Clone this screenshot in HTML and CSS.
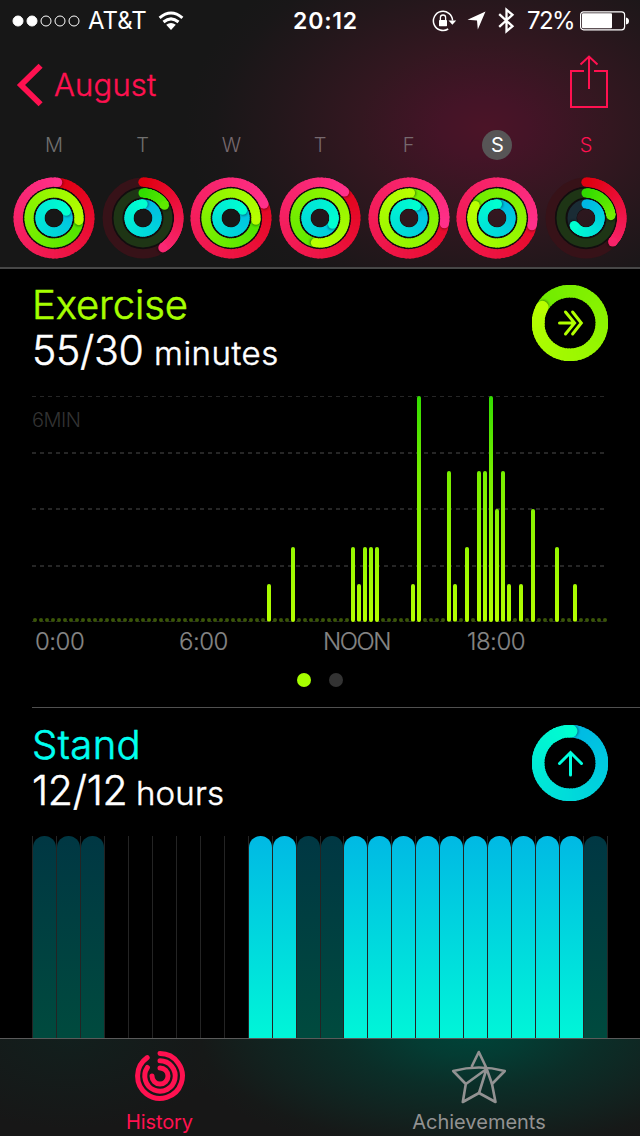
FILE: index.html
```html
<!DOCTYPE html>
<html lang="en">
<head>
<meta charset="utf-8">
<title>Activity</title>
<link rel="stylesheet" href="styles.css">
</head>
<body>
<div class="screen">
  <header class="header">
    <div class="status">
      <div class="status-left">
        <svg class="signal" width="68" height="14" viewBox="0 0 68 14">
          <g fill="#fff" stroke="#fff"><circle cx="6" cy="7" r="5"/><circle cx="20" cy="7" r="5"/></g>
          <g fill="none" stroke="#fff"><circle cx="34" cy="7" r="5"/><circle cx="48" cy="7" r="5"/><circle cx="62" cy="7" r="5"/></g>
        </svg>
        <span class="carrier">AT&amp;T</span>
        <svg class="wifi" width="26" height="20" viewBox="0 0 26 20" fill="none" stroke="#fff" stroke-width="3">
          <path d="M1.6 6.8Q13-2.8 24.4 6.8"/><path d="M5.5 11Q13 4.7 20.5 11"/><path d="M8.2 13.8Q13 10 17.8 13.8L13 19Z" fill="#fff" stroke="none"/>
        </svg>
      </div>
      <span class="clock">20:12</span>
      <div class="status-right">
        <svg class="lock" width="25" height="22" viewBox="0 0 25 22">
          <path d="M16.2 19A9.6 9.6 0 1 1 20.6 10.5" fill="none" stroke="#fff" stroke-width="1.5"/>
          <path d="M16.5 10.5H24.2L20.4 14.7Z" fill="#fff"/><rect x="7" y="10" width="8" height="6.2" rx=".6" fill="#fff"/>
          <path d="M8.4 10V7.6a2.6 2.6 0 0 1 5.2 0V10" fill="none" stroke="#fff" stroke-width="1.3"/>
        </svg>
        <svg class="locate" width="19" height="19" viewBox="0 0 19 19"><path d="M18.5.5L10.8 18.5L10 9.5L.5 8.7Z" fill="#fff"/></svg>
        <svg class="bt" width="17" height="27" viewBox="0 0 17 27" fill="none" stroke="#fff" stroke-width="2.3"><path d="M1.2 7.2L14.5 19.2L8.5 24.3V2.7L14.5 7.8L1.2 19.8"/></svg>
        <span class="percent">72%</span>
        <svg class="battery" width="50" height="20" viewBox="0 0 50 20"><rect x=".6" y=".8" width="44" height="18" rx="3" fill="none" stroke="#fff" stroke-width="1.2"/><rect x="2" y="2.3" width="30" height="15" rx="1" fill="#fff"/><path d="M46 6.5q3 .5 3 3.5t-3 3.5z" fill="#fff"/></svg>
      </div>
    </div>
    <div class="nav">
      <svg class="chevron" width="27" height="44" viewBox="0 0 27 44"><path d="M24.6 2.8L5 22L24.6 41.2" fill="none" stroke="#ff1150" stroke-width="5.8"/></svg>
      <span class="nav-title">August</span>
      <svg class="share" width="38" height="54" viewBox="0 0 38 54" fill="none" stroke="#ff1150" stroke-width="2"><path d="M14 16H1V52H37V16H24M19 34V2M10.5 9.5L19 1.5L27.5 9.5"/></svg>
    </div>
    <div class="week" id="week"></div>
  </header>
  <main class="main">
    <section class="exercise">
      <div class="summary">
        <div>
          <h2 class="title title-exercise">Exercise</h2>
          <p class="value"><span class="num num-ex">55/30</span><span class="unit unit-min">minutes</span></p>
        </div>
        <svg class="badge" id="badge-exercise" width="76" height="76" viewBox="-38 -38 76 76">
          <g class="glyph" fill="none" stroke="#b2ff00" stroke-width="3" stroke-linecap="round" stroke-linejoin="miter"><path d="M-10.5 0H4M-4.5-11L4.6 0L-4.5 11M2.6-11L11.3 0L2.6 11"/></g>
        </svg>
      </div>
      <div class="chart">
        <i class="rule rule-top"></i><i class="rule rule-2"></i><i class="rule rule-3"></i><i class="rule rule-4"></i><i class="rule rule-base"></i>
        <span class="scale">6MIN</span>
        <div class="bars" id="minutes"></div>
      </div>
      <div class="axis"><span>0:00</span><span>6:00</span><span class="noon">NOON</span><span>18:00</span></div>
      <div class="pager"><i class="dot on"></i><i class="dot"></i></div>
    </section>
    <section class="stand">
      <div class="summary">
        <div>
          <h2 class="title title-stand">Stand</h2>
          <p class="value"><span class="num num-st">12/12</span><span class="unit unit-hr">hours</span></p>
        </div>
        <svg class="badge" id="badge-stand" width="76" height="76" viewBox="-38 -38 76 76">
          <g class="glyph" fill="none" stroke="#00ffe0" stroke-width="3" stroke-linecap="round"><path d="M.5 12V-10M-10.5 0.5L.5-10.5L11.5.5"/></g>
        </svg>
      </div>
      <div class="hours" id="hours"></div>
    </section>
  </main>
  <nav class="tabs">
    <div class="tab tab-on">
      <svg width="52" height="54" viewBox="-26 -26 52 54" fill="none" stroke="#ff1150" stroke-width="5" stroke-linecap="round">
        <path d="M0-22.4A22.4 22.4 0 1 1-12.8-18.4"/><path d="M0-15.2A15.2 15.2 0 1 1-12.6-8.5"/><path d="M0-8A8 8 0 1 1-8 0"/>
      </svg>
      <span class="tab-label label-history">History</span>
    </div>
    <div class="tab">
      <svg width="56" height="54" viewBox="0 0 56 54" fill="none" stroke="#929292" stroke-width="2.6" stroke-linejoin="round">
        <path d="M20.5 17L27.8 2L35.2 17.5M2.2 21Q28 14 53.8 21L41 34L44.5 52L28 43L11.8 52L14.8 34Z"/><path d="M14.8 34L35.5 19L28 43M35.2 17.5L41 34"/>
      </svg>
      <span class="tab-label label-achieve">Achievements</span>
    </div>
  </nav>
</div>
<script src="app.js"></script>
</body>
</html>
```

FILE: styles.css
```css
* { box-sizing: border-box; }
body { margin: 0; background: #000; font-family: Inter, "Liberation Sans", sans-serif; font-weight: 300; }
h2, p { margin: 0; font-weight: 300; }
svg { display: block; flex: none; }
.screen { width: 640px; height: 1136px; overflow: hidden; display: flex; flex-direction: column; }
.header { height: 269px; flex: none; border-bottom: 2px solid #474747; background: radial-gradient(ellipse 300px 200px at 485px 128px, #4b1427 0%, #441427 15%, #331720 42%, #23171b 70%, #191718 90%, #171717 100%) #171717; }

.status { height: 41px; display: grid; grid-template-columns: 1fr auto 1fr; align-items: center; color: #fff; padding-left: 12px; padding-right: 10px; }
.status-left, .status-right { display: flex; align-items: center; }
.status-right { justify-content: flex-end; }
.carrier { font-size: 24px; font-weight: 400; margin-left: 8px; width: 59px; letter-spacing: 0; }
.wifi { margin-left: 11px; }
.clock { font-size: 23px; font-weight: 600; letter-spacing: .8px; margin-left: 9px; }
.locate { margin-left: 10px; }
.bt { margin-left: 12px; }
.percent { font-size: 24px; font-weight: 400; width: 53px; margin-left: 12px; letter-spacing: -1.6px; white-space: nowrap; }

.nav { height: 88px; display: flex; align-items: center; padding: 0 32px 0 16px; color: #ff1150; }
.chevron { margin-top: -1px; }
.nav-title { font-size: 31px; margin: -2px 0 0 11px; letter-spacing: .2px; flex: 1; -webkit-text-stroke: .4px; }
.share { margin-top: -6px; }

.week { display: grid; grid-template-columns: repeat(7, 1fr); padding: 1px 9.7px 0; }
.day { display: flex; flex-direction: column; align-items: center; }
.day-name { width: 30px; height: 30px; border-radius: 15px; font-size: 20px; line-height: 30px; text-align: center; color: #77696e; }
.day-name.weekday-dark { color: #707070; }
.day-name.selected { background: #575556; color: #fff; font-weight: 400; }
.day-name.today { color: #ff1150; }
.day svg { margin-top: 17px; }

.main { flex: 1; min-height: 0; overflow: hidden; }
.exercise { height: 438px; padding: 16px 32px 0; }
.stand { margin-left: 32px; padding: 17px 32px 0 0; border-top: 1px solid #505050; }
.summary { display: flex; justify-content: space-between; height: 111px; }
.title { font-size: 40px; line-height: 39px; -webkit-text-stroke: .6px; }
.title-exercise { color: #a6ff00; letter-spacing: -.1px; }
.title-stand { color: #00fff0; letter-spacing: .4px; }
.value { color: #fff; line-height: 52px; white-space: nowrap; -webkit-text-stroke: .5px; }
.num { font-size: 41px; letter-spacing: -.3px; }
.unit { font-size: 33px; margin-left: 10.5px; letter-spacing: .5px; }
.unit-hr { margin-left: 8.5px; letter-spacing: .2px; }

.chart { position: relative; height: 226px; }
.rule { position: absolute; left: 0; width: 575px; height: 2px; background: repeating-linear-gradient(90deg, #262626 0 4px, transparent 4px 8px); }
.rule-top { top: 0; height: 1px; }
.rule-2 { top: 56px; }
.rule-3 { top: 112px; }
.rule-4 { top: 169px; }
.rule-base { bottom: 0; height: 1px; }
.scale { position: absolute; left: 0; top: 12px; font-size: 20px; line-height: 24px; letter-spacing: -.5px; color: #333; }
.bars { position: absolute; left: 1px; top: 0; height: 226px; display: flex; align-items: flex-end; gap: 2px; }
.bar { width: 4px; border-radius: 2px; background: linear-gradient(#32dc00, #78ee00 35%, #b4ff00) bottom / 4px 226px no-repeat; }
.bar.empty { height: 4px; background: #3a5608; }
.axis { display: grid; grid-template-columns: repeat(4, 144px); font-size: 24px; line-height: 40px; letter-spacing: -.5px; color: #858585; padding-left: 3px; -webkit-text-stroke: .2px; }
.noon { letter-spacing: -1.5px; }
.pager { display: flex; justify-content: center; gap: 18px; margin-top: 11px; }
.dot { width: 14px; height: 14px; border-radius: 7px; background: #333; }
.dot.on { background: #a6ff00; }

.hours { width: 576px; height: 208px; display: grid; grid-template-columns: repeat(24, 1fr); border-right: 1px solid #262626; }
.hour { border-left: 1px solid #242424; }
.hour i { display: block; height: 100%; border-radius: 12px 12px 0 0; }
.hour.stood i { background: linear-gradient(#00b9e4, #00f5d8 200px); }
.hour.idle i { background: linear-gradient(#003743, #004a3e 200px); }

.tabs { height: 98px; flex: none; border-top: 1px solid #5a5a5a; display: grid; grid-template-columns: 1fr 1fr; background: radial-gradient(ellipse 300px 125px at 470px -5px, #004338 0%, #043c33 18%, #0b2e28 42%, #12221f 70%, #161918 90%, transparent 100%), radial-gradient(ellipse 160px 90px at 70px 0, #121f1d, transparent), #171717; }
.tab { display: flex; flex-direction: column; align-items: center; padding-top: 11px; color: #929292; }
.tab:last-child { padding-right: 2px; }
.tab-label { font-size: 20px; line-height: 24px; font-weight: 400; margin-top: 6px; }
.label-history { letter-spacing: -.1px; margin-right: 1px; }
.tab-on { color: #ff1150; }
```

FILE: app.js
```js
const NS = 'http://www.w3.org/2000/svg';
const RED = [[224, 0, 16], [255, 48, 138]];
const GREEN = [[50, 220, 0], [184, 255, 0]];
const CYAN = [[0, 184, 228], [0, 255, 208]];

function add(parent, tag, attrs) {
  const el = document.createElementNS(NS, tag);
  for (const k in attrs) el.setAttribute(k, attrs[k]);
  parent.appendChild(el);
  return el;
}
const point = (r, turn) => [r * Math.sin(turn * 2 * Math.PI), -r * Math.cos(turn * 2 * Math.PI)];
const mix = (c, t) => 'rgb(' + c[0].map((v, i) => Math.round(v + (c[1][i] - v) * t)).join(',') + ')';

// Draws the last full turn of a progress ring, coloured along its length.
function ring(svg, r, w, value, colors, track) {
  if (value < 1) add(svg, 'circle', { r, fill: 'none', stroke: track, 'stroke-width': w });
  const start = Math.max(0, value - 1);
  const span = Math.max(value, .5);
  const n = 60, step = (value - start) / n;
  const overlap = 2 / (2 * Math.PI * r);
  if (start === 0) {
    const p = point(r, 0);
    add(svg, 'circle', { cx: p[0], cy: p[1], r: w / 2, fill: mix(colors, 0) });
  }
  const seg = i => {
    const a = start + i * step;
    const end = i === n - 1 ? value : Math.min(value, a + step + overlap);
    const p = point(r, a), q = point(r, end);
    add(svg, 'path', { d: `M${p}A${r} ${r} 0 0 1 ${q}`, fill: 'none', stroke: mix(colors, Math.min(1, a / span)), 'stroke-width': w });
  };
  for (let i = 0; i < n - 4; i++) seg(i);
  const e = point(r, value);
  const s = point(r, value + 1.6 / (2 * Math.PI * r));
  add(svg, 'circle', { cx: s[0], cy: s[1], r: w / 2 - .5, fill: '#000', opacity: .4, style: 'filter:blur(1px)' });
  for (let i = n - 6; i < n; i++) seg(i);
  add(svg, 'circle', { cx: e[0], cy: e[1], r: w / 2, fill: mix(colors, Math.min(1, value / span)) });
}

const days = [
  ['M', 1.016, 1.267, 1.17], ['T', .406, .165, 1.002], ['W', 1.186, 1.264, 1.158],
  ['T', 1.12, 1.53, 1.325], ['F', 1.275, 2.01, 1.089], ['S', 1.284, 1.833, 1.006], ['S', .366, .235, .66]
];
days.forEach((d, i) => {
  const day = document.createElement('div');
  day.className = 'day';
  const name = document.createElement('span');
  name.className = 'day-name' + (i < 2 ? ' weekday-dark' : i === 5 ? ' selected' : i === 6 ? ' today' : '');
  name.textContent = d[0];
  day.appendChild(name);
  const svg = add(day, 'svg', { width: 82, height: 82, viewBox: '-41 -41 82 82' });
  add(svg, 'circle', { r: 25, fill: 'none', stroke: '#120d0f', 'stroke-width': 13 });
  add(svg, 'circle', { r: 14.5, fill: 'none', stroke: '#120d0f', 'stroke-width': 11 });
  ring(svg, 35.8, 9.3, d[1], RED, '#371218');
  ring(svg, 25, 9, d[2], GREEN, '#1e3515');
  ring(svg, 14, 9, d[3], CYAN, '#1a2c35');
  document.getElementById('week').appendChild(day);
});

[['badge-exercise', 1.833, GREEN], ['badge-stand', 1.006, CYAN]].forEach(([id, v, c]) => {
  ring(document.getElementById(id), 31.9, 12.6, v, c, '#000');
});

const active = { 39: 1, 43: 2, 53: 2, 54: 1, 55: 2, 56: 2, 57: 2, 63: 1, 64: 6, 69: 4, 70: 1, 72: 2, 74: 4, 75: 4, 76: 6, 77: 3, 78: 4, 79: 1, 81: 1, 83: 3, 87: 2, 90: 1 };
for (let i = 0; i < 96; i++) {
  const bar = document.createElement('i');
  bar.className = active[i] ? 'bar' : 'bar empty';
  if (active[i]) bar.style.height = active[i] * 226 / 6 + 'px';
  document.getElementById('minutes').appendChild(bar);
}

[...'iii......ssiissssssssssi'].forEach(k => {
  const hour = document.createElement('div');
  hour.className = 'hour' + (k === 's' ? ' stood' : k === 'i' ? ' idle' : '');
  hour.appendChild(document.createElement('i'));
  document.getElementById('hours').appendChild(hour);
});
```
